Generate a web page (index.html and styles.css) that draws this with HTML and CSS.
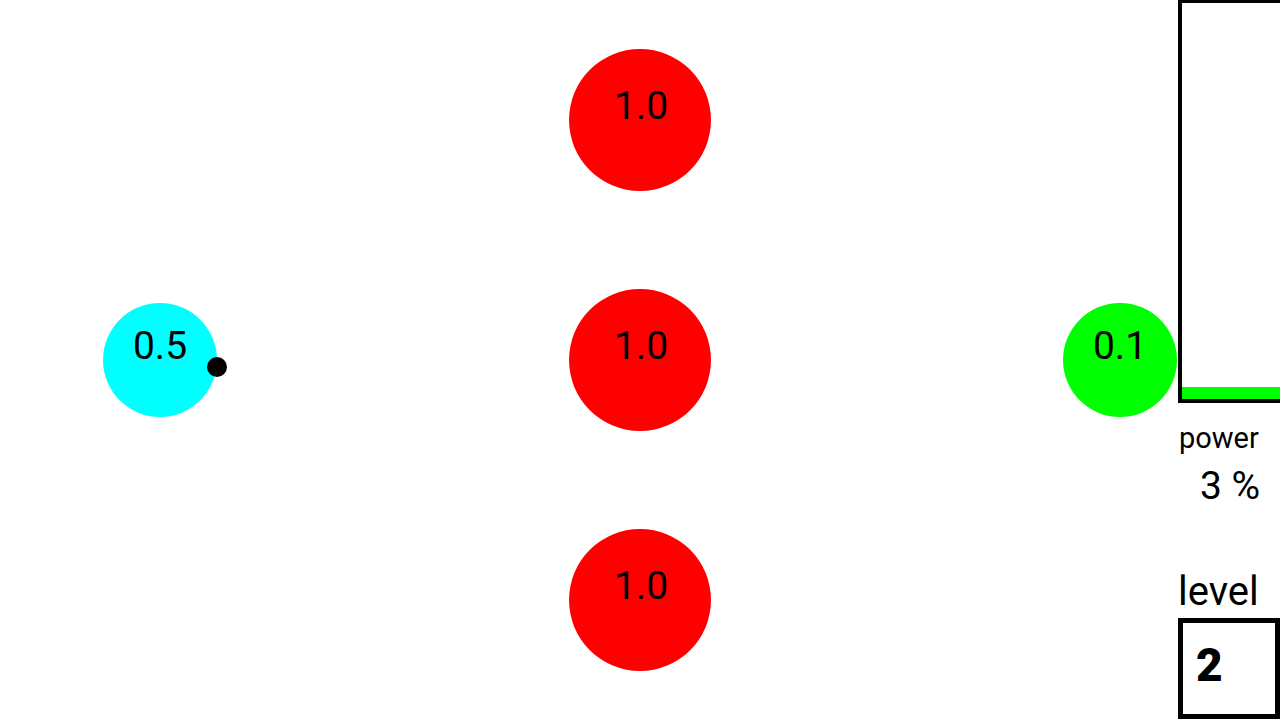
FILE: index.html
```html
<!DOCTYPE html>
<html lang="en">
<head>
  <meta charset="UTF-8" />
  <title>power</title>
  <link rel="stylesheet" href="styles.css">
</head>
<body>

  <div class="field">
    <div class="ball big red" style="left: 569px; top: 49px;">1.0</div>
    <div class="ball big red" style="left: 569px; top: 289px;">1.0</div>
    <div class="ball big red" style="left: 569px; top: 529px;">1.0</div>
    <div class="ball small cyan" style="left: 103px; top: 303px;">0.5</div>
    <div class="ball small green" style="left: 1063px; top: 303px;">0.1</div>
    <div class="dot" style="left: 207px; top: 357px;"></div>
  </div>

  <div class="side">
    <div class="meter">
      <div class="meter-fill" style="height: 3%;"></div>
    </div>
    <div class="power-label">power</div>
    <div class="power-value">3 %</div>
    <div class="level-label">level</div>
    <div class="level-box">2</div>
  </div>

</body>
</html>
```

FILE: styles.css
```css
body {
  margin: 0;
  width: 1280px;
  height: 720px;
  overflow: hidden;
  display: flex;
  background: white;
  color: black;
  font-family: Roboto, 'Noto Sans', sans-serif;
}
.field {
  position: relative;
  flex: 1;
}
.ball {
  position: absolute;
  box-sizing: border-box;
  border-radius: 50%;
  text-align: center;
  font-size: 39px;
  line-height: 39px;
}
.big {
  width: 142px;
  height: 142px;
  padding-top: 38px;
  padding-left: 2px;
}
.small {
  width: 114px;
  height: 114px;
  padding-top: 24px;
}
.red {
  background: #ff0000;
}
.cyan {
  background: #00ffff;
}
.green {
  background: #00ff00;
}
.dot {
  position: absolute;
  width: 20px;
  height: 20px;
  border-radius: 50%;
  background: black;
}
.side {
  width: 102px;
  display: flex;
  flex-direction: column;
}
.meter {
  height: 403px;
  box-sizing: border-box;
  border: 4px solid black;
  border-top-width: 3px;
  border-right: none;
  display: flex;
  flex-direction: column;
  justify-content: flex-end;
}
.meter-fill {
  background: #00ff00;
}
.power-label {
  margin-top: 21px;
  margin-left: 1px;
  font-size: 29px;
  line-height: 29px;
}
.power-value {
  margin-top: 14px;
  padding-left: 2px;
  text-align: center;
  font-size: 39px;
  line-height: 39px;
}
.level-label {
  margin-top: 66px;
  font-size: 40px;
  line-height: 40px;
}
.level-box {
  margin-top: 6px;
  height: 101px;
  box-sizing: border-box;
  border: 5px solid black;
  padding: 19px 0 0 13px;
  font-size: 46px;
  line-height: 46px;
  font-weight: 900;
}
```
